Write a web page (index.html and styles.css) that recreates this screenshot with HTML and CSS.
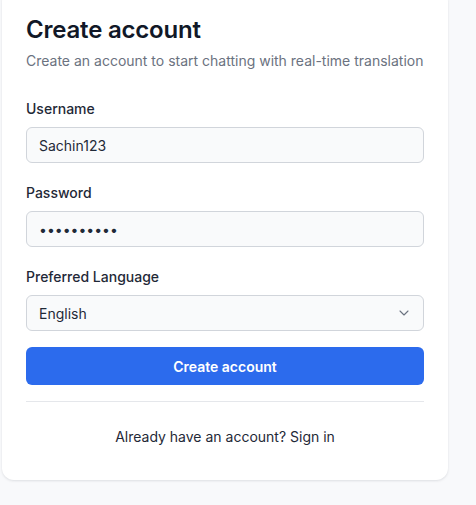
FILE: index.html
```html
<!DOCTYPE html>
<html lang="en">
<head>
<meta charset="utf-8">
<title>Create account</title>
<link rel="stylesheet" href="styles.css">
</head>
<body>
<main class="card">
  <h1 class="title">Create account</h1>
  <p class="subtitle">Create an account to start chatting with real-time translation</p>
  <form class="form">
    <div class="field">
      <label class="label" for="username">Username</label>
      <input class="input" id="username" type="text" value="Sachin123">
    </div>
    <div class="field">
      <label class="label" for="password">Password</label>
      <input class="input input-password" id="password" type="password" value="secretpass">
    </div>
    <div class="field">
      <label class="label" for="language">Preferred Language</label>
      <div class="select-wrap">
        <select class="input select" id="language">
          <option>English</option>
          <option>Spanish</option>
          <option>French</option>
        </select>
        <svg class="chevron" width="16" height="16" viewBox="0 0 24 24" fill="none" stroke="currentColor" stroke-width="1.6" stroke-linecap="round" stroke-linejoin="round"><path d="m6 9 6 6 6-6"/></svg>
      </div>
    </div>
    <button class="button" type="button">Create account</button>
  </form>
  <div class="divider"></div>
  <p class="footer">Already have an account? <a class="link" href="#">Sign in</a></p>
</main>
</body>
</html>
```

FILE: styles.css
```css
* { box-sizing: border-box; }

html, body {
  margin: 0;
  padding: 0;
  background: #f8f9fb;
  font-family: Inter, "Noto Sans", sans-serif;
  color: #1f2937;
}

body {
  overflow: hidden;
  height: 505px;
}

.card {
  width: 446px;
  margin: -10px 0 0 2px;
  padding: 24px 24px 33px;
  background: #ffffff;
  border-radius: 12px;
  box-shadow: 0 1px 3px rgba(15, 23, 42, 0.08), 0 1px 2px rgba(15, 23, 42, 0.04);
}

.title {
  margin: 0;
  font-size: 24px;
  line-height: 32px;
  font-weight: 600;
  color: #111827;
  letter-spacing: -0.2px;
}

.subtitle {
  margin: 5px 0 0;
  font-size: 14px;
  line-height: 20px;
  color: #6b7280;
}

.form {
  margin-top: 28px;
  display: flex;
  flex-direction: column;
}

.field {
  display: flex;
  flex-direction: column;
  gap: 8px;
  margin-bottom: 20px;
}

.field:nth-child(3) {
  margin-bottom: 16px;
}

.label {
  font-size: 14px;
  line-height: 20px;
  font-weight: 500;
  color: #1f2937;
}

.input {
  display: block;
  width: 100%;
  height: 36px;
  padding: 0 12px;
  border: 1px solid #d1d5db;
  border-radius: 6px;
  background: #f9fafb;
  font-family: inherit;
  font-size: 14px;
  color: #1f2937;
  outline: none;
}

.input-password {
  font-size: 14px;
  letter-spacing: 0;
}

.select-wrap {
  position: relative;
}

.select {
  appearance: none;
  -webkit-appearance: none;
  padding-right: 36px;
}

.chevron {
  position: absolute;
  right: 12px;
  top: 10px;
  color: #6b7280;
  pointer-events: none;
}

.button {
  height: 38px;
  width: 100%;
  border: none;
  border-radius: 6px;
  background: #2c6bed;
  color: #ffffff;
  font-family: inherit;
  font-size: 14px;
  font-weight: 600;
  cursor: pointer;
}

.divider {
  margin-top: 16px;
  height: 1px;
  background: #e5e7eb;
}

.footer {
  margin: 25px 0 0;
  text-align: center;
  font-size: 14px;
  line-height: 20px;
  color: #1f2937;
}

.link {
  color: #1f2937;
  text-decoration: none;
}
```
